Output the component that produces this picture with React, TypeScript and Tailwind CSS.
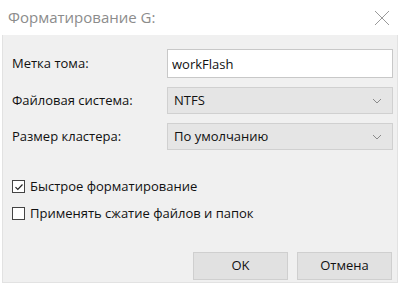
import { useState } from 'react';

function Chevron() {
  return (
    <svg className="w-[10px] h-[6px]" viewBox="0 0 10 6" fill="none" stroke="#8a8a8a" strokeWidth={1}>
      <path d="M1 1l4 4 4-4" />
    </svg>
  );
}

function Select({ value }: { value: string }) {
  return (
    <div className="h-[27px] w-[226px] flex items-center justify-between pl-[6px] pr-[10px] bg-[#e5e5e5] border border-[#d0d0d0]">
      <span>{value}</span>
      <Chevron />
    </div>
  );
}

function Check({ checked }: { checked: boolean }) {
  return (
    <span className="w-[13px] h-[13px] flex items-center justify-center bg-white border border-[#444]">
      {checked && (
        <svg className="w-[10px] h-[10px]" viewBox="0 0 10 10" fill="none" stroke="#222" strokeWidth={1.2}>
          <path d="M1.5 5.2l2.3 2.3 4.7-5" />
        </svg>
      )}
    </span>
  );
}

export default function App() {
  const [label, setLabel] = useState('workFlash');
  const [quick, setQuick] = useState(true);
  const [compress, setCompress] = useState(false);

  return (
    <div
      className="w-[400px] h-[287px] bg-white text-[13px] text-[#111] flex flex-col"
      style={{ fontFamily: '"Open Sans", "Noto Sans", sans-serif' }}
    >
      <div className="h-[35px] flex items-center justify-between pl-[8px] pr-[10px]">
        <span className="text-[15px] text-[#8c8c8c]">Форматирование G:</span>
        <svg className="w-[16px] h-[16px]" viewBox="0 0 16 16" fill="none" stroke="#9a9a9a" strokeWidth={1}>
          <path d="M1 1l14 14M15 1L1 15" />
        </svg>
      </div>

      <div className="mx-[2px] h-[248px] bg-[#f0f0f0] border-x border-b border-[#e2e2e2] flex flex-col pl-[9px] pr-[5px]">
        <div className="mt-[14px] grid grid-cols-[155px_226px] gap-y-[9px] items-center">
          <span>Метка тома:</span>
          <input
            value={label}
            onChange={e => setLabel(e.target.value)}
            className="h-[29px] w-[226px] px-[4px] bg-white border border-[#c8c8c8] outline-none"
          />
          <span>Файловая система:</span>
          <Select value="NTFS" />
          <span>Размер кластера:</span>
          <Select value="По умолчанию" />
        </div>

        <div className="mt-[27px] flex flex-col gap-[7px]">
          <button className="flex items-center gap-[5px]" onClick={() => setQuick(!quick)}>
            <Check checked={quick} />
            <span>Быстрое форматирование</span>
          </button>
          <button className="flex items-center gap-[5px]" onClick={() => setCompress(!compress)}>
            <Check checked={compress} />
            <span>Применять сжатие файлов и папок</span>
          </button>
        </div>

        <div className="mt-auto mb-[2px] flex justify-end gap-[9px]">
          <button className="w-[95px] h-[28px] bg-[#e1e1e1] border border-[#cfcfcf]">OK</button>
          <button className="w-[95px] h-[28px] bg-[#e1e1e1] border border-[#cfcfcf]">Отмена</button>
        </div>
      </div>
    </div>
  );
}
